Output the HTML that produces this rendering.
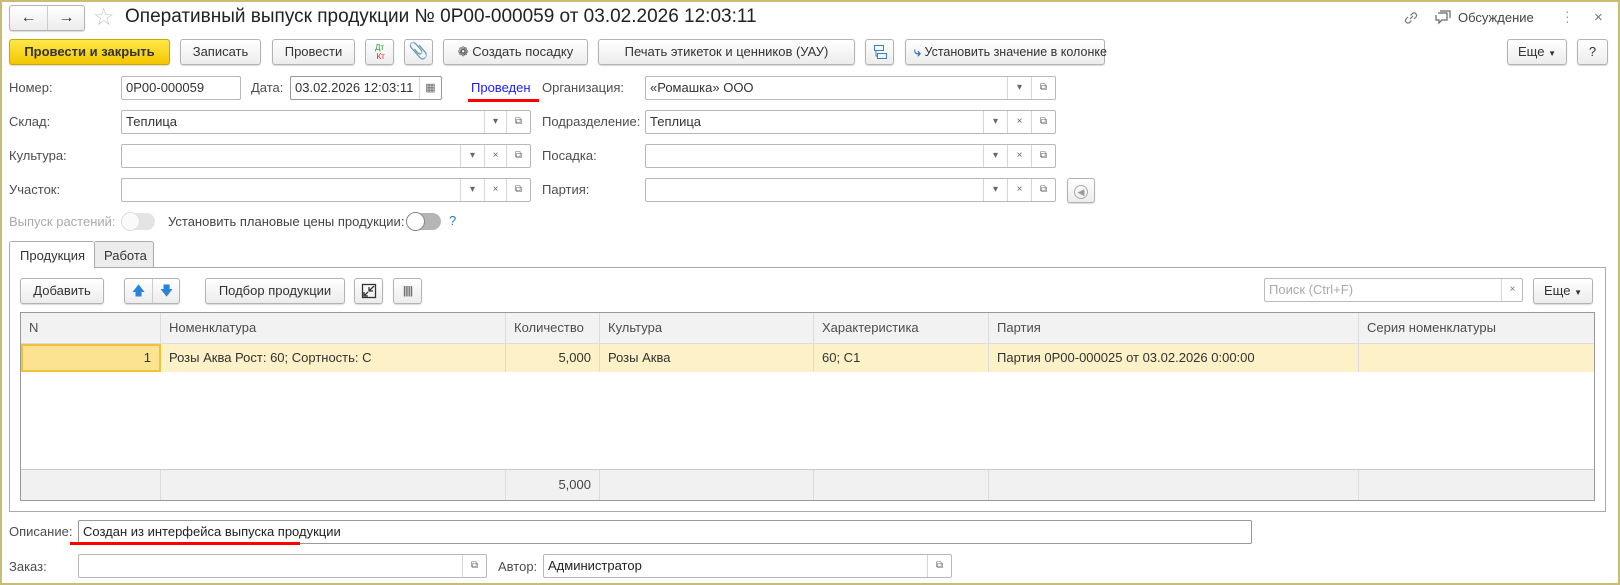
<!DOCTYPE html>
<html><head><meta charset="utf-8"><style>
*{box-sizing:border-box;margin:0;padding:0}
body{width:1620px;height:585px;background:#fff;font-family:"Liberation Sans",Arial,sans-serif;font-size:13px;color:#333;position:relative;overflow:hidden}
.a{position:absolute}
.frame{left:0;top:0;width:1620px;height:585px;border:2px solid #c9bd76;border-right-width:2px}
.btn{position:absolute;height:26px;border:1px solid #b3b3b3;border-radius:3px;background:linear-gradient(#fff,#ececec);box-shadow:0 1px 1px rgba(0,0,0,.15);text-align:center;line-height:24px;color:#333;font-size:13px;white-space:nowrap}
.y{background:linear-gradient(#ffe84a,#f3c600);border-color:#c9a800;font-weight:bold;color:#333}
.lbl{position:absolute;color:#4d4d4d;line-height:16px}
.inp{position:absolute;height:24px;border:1px solid #b8b8b8;border-radius:2px;background:#fff;line-height:22px;padding-left:4px;color:#333;white-space:nowrap;overflow:hidden}
.sb{position:absolute;top:0;height:22px;border-left:1px solid #d6d6d6;text-align:center;font-size:10px;color:#666;line-height:22px}
.cell{position:absolute;height:100%;border-right:1px solid #dcdcdc;padding-left:8px;white-space:nowrap}
</style></head><body>
<div class="a frame"></div>

<div class="btn" style="left:9px;top:5px;width:76px;height:26px"><span style="position:absolute;left:0;width:38px;border-right:1px solid #ccc;height:24px;font-size:16px">&#8592;</span><span style="position:absolute;left:38px;width:37px;font-size:16px">&#8594;</span></div>
<div class="a" style="left:93px;top:3px;font-size:24px;color:#c8c8c8">&#9734;</div>
<div class="a" style="left:125px;top:6px;font-size:19px;color:#222;white-space:nowrap">Оперативный выпуск продукции № 0P00-000059 от 03.02.2026 12:03:11</div>
<svg class="a" style="left:1402px;top:9px" width="18" height="18" viewBox="0 0 18 18" fill="none" stroke="#777" stroke-width="1.2"><path d="M8 10l3-3M6 8l-2 2a2.5 2.5 0 003.5 3.5l2-2M12 10l2-2a2.5 2.5 0 00-3.5-3.5l-2 2"/></svg>
<svg class="a" style="left:1434px;top:9px" width="18" height="18" viewBox="0 0 18 18" fill="none" stroke="#666" stroke-width="1.2"><path d="M4 4h9v7H8l-3 3v-3H2V6M6 2h10v7"/></svg>
<div class="a" style="left:1458px;top:10px;color:#444">Обсуждение</div>
<div class="a" style="left:1565px;top:9px;color:#999;font-size:14px;line-height:5px">·<br>·<br>·</div>
<div class="a" style="left:1594px;top:9px;color:#777;font-size:15px">×</div>

<div class="btn y" style="left:9px;top:39px;width:161px">Провести и закрыть</div>
<div class="btn" style="left:180px;top:39px;width:81px">Записать</div>
<div class="btn" style="left:272px;top:39px;width:83px">Провести</div>
<div class="btn" style="left:365px;top:39px;width:29px;font-size:8px;line-height:9px;padding-top:3px"><span style="color:#2a9a2a">Дт</span><br><span style="color:#d22">&nbsp;Кт</span></div>
<div class="btn" style="left:404px;top:39px;width:29px;font-size:16px;color:#666">&#128206;</div>
<div class="btn" style="left:443px;top:39px;width:145px"><span style="color:#444">&#10049;</span> Создать посадку</div>
<div class="btn" style="left:598px;top:39px;width:257px">Печать этикеток и ценников (УАУ)</div>
<div class="btn" style="left:865px;top:39px;width:29px"><svg width="16" height="16" viewBox="0 0 16 16" style="margin-top:4px" fill="none" stroke="#3b7fc4"><rect x="2.5" y="1.5" width="9" height="5"/><rect x="5.5" y="9.5" width="9" height="5"/><path d="M4 7v5h1"/></svg></div>
<div class="btn" style="left:905px;top:39px;width:200px;font-size:12.5px;text-align:left;padding-left:8px"><span style="color:#2c6fb7;font-weight:bold">&#10551;</span> Установить значение в колонке</div>
<div class="btn" style="left:1507px;top:39px;width:60px">Еще <span style="font-size:8px">&#9660;</span></div>
<div class="btn" style="left:1577px;top:39px;width:31px">?</div>

<div class="lbl" style="left:9px;top:80px">Номер:</div>
<div class="inp" style="left:121px;top:76px;width:120px">0P00-000059</div>
<div class="lbl" style="left:251px;top:80px">Дата:</div>
<div class="inp" style="left:290px;top:76px;width:152px;border-color:#999">03.02.2026 12:03:11<span class="sb" style="left:128px;width:22px;font-size:11px">&#9638;</span></div>
<div class="a" style="left:471px;top:80px;color:#1a1aff">Проведен</div>
<div class="a" style="left:468px;top:99px;width:71px;height:3px;background:#f00"></div>
<div class="lbl" style="left:542px;top:80px">Организация:</div>
<div class="inp" style="left:645px;top:76px;width:411px">«Ромашка» ООО<span class="sb" style="left:361px;width:24px">&#9662;</span><span class="sb" style="left:385px;width:24px">&#10697;</span></div>

<div class="lbl" style="left:9px;top:114px">Склад:</div>
<div class="inp" style="left:121px;top:110px;width:410px">Теплица<span class="sb" style="left:362px;width:22px">&#9662;</span><span class="sb" style="left:384px;width:24px">&#10697;</span></div>
<div class="lbl" style="left:542px;top:114px">Подразделение:</div>
<div class="inp" style="left:645px;top:110px;width:411px">Теплица<span class="sb" style="left:337px;width:24px">&#9662;</span><span class="sb" style="left:361px;width:24px">×</span><span class="sb" style="left:385px;width:24px">&#10697;</span></div>

<div class="lbl" style="left:9px;top:148px">Культура:</div>
<div class="inp" style="left:121px;top:144px;width:410px"><span class="sb" style="left:338px;width:24px">&#9662;</span><span class="sb" style="left:362px;width:22px">×</span><span class="sb" style="left:384px;width:24px">&#10697;</span></div>
<div class="lbl" style="left:542px;top:148px">Посадка:</div>
<div class="inp" style="left:645px;top:144px;width:411px"><span class="sb" style="left:337px;width:24px">&#9662;</span><span class="sb" style="left:361px;width:24px">×</span><span class="sb" style="left:385px;width:24px">&#10697;</span></div>

<div class="lbl" style="left:9px;top:182px">Участок:</div>
<div class="inp" style="left:121px;top:178px;width:410px"><span class="sb" style="left:338px;width:24px">&#9662;</span><span class="sb" style="left:362px;width:22px">×</span><span class="sb" style="left:384px;width:24px">&#10697;</span></div>
<div class="lbl" style="left:542px;top:182px">Партия:</div>
<div class="inp" style="left:645px;top:178px;width:411px"><span class="sb" style="left:337px;width:24px">&#9662;</span><span class="sb" style="left:361px;width:24px">×</span><span class="sb" style="left:385px;width:24px">&#10697;</span></div>
<div class="btn" style="left:1067px;top:178px;width:28px;height:25px"><span style="display:inline-block;width:14px;height:14px;border:1px solid #aaa;border-radius:50%;margin-top:5px;font-size:9px;line-height:12px;color:#999">&#9664;</span></div>

<div class="lbl" style="left:9px;top:214px;color:#aaa">Выпуск растений:</div>
<div class="a" style="left:121px;top:213px;width:34px;height:17px;border-radius:9px;background:#e4e4e4"></div>
<div class="a" style="left:121px;top:212px;width:19px;height:19px;border-radius:50%;background:#fafafa;border:1px solid #ddd"></div>
<div class="lbl" style="left:168px;top:214px;color:#444">Установить плановые цены продукции:</div>
<div class="a" style="left:407px;top:213px;width:34px;height:17px;border-radius:9px;background:#b5b5b5"></div>
<div class="a" style="left:406px;top:212px;width:19px;height:19px;border-radius:50%;background:#fff;border:1px solid #888"></div>
<div class="a" style="left:449px;top:213px;color:#2a7ac0">?</div>

<div class="a" style="left:9px;top:267px;width:1597px;height:245px;border:1px solid #aaa"></div>
<div class="a" style="left:9px;top:241px;width:86px;height:27px;border:1px solid #aaa;border-bottom:none;border-radius:3px 3px 0 0;background:#fff;padding:6px 0 0 10px;color:#333">Продукция</div>
<div class="a" style="left:95px;top:241px;width:59px;height:27px;border:1px solid #aaa;border-left:none;border-radius:0 3px 0 0;background:#ececec;padding:6px 0 0 9px;color:#333">Работа</div>

<div class="btn" style="left:20px;top:278px;width:84px">Добавить</div>
<div class="btn" style="left:124px;top:278px;width:56px"><span style="position:absolute;left:0;width:28px;border-right:1px solid #ccc;color:#2b83d6">&#129093;</span><span style="position:absolute;left:28px;width:27px;color:#2b83d6">&#129095;</span></div>
<div class="btn" style="left:205px;top:278px;width:140px">Подбор продукции</div>
<div class="btn" style="left:354px;top:278px;width:29px"><svg width="16" height="16" viewBox="0 0 16 16" style="margin-top:4px" fill="none" stroke="#333" stroke-width="1.3"><rect x="1.5" y="1.5" width="13" height="13"/><path d="M13 3L8 8M8 4v4h4M3 13l4-4M3 9v4h4"/></svg></div>
<div class="btn" style="left:393px;top:278px;width:29px;font-size:11px;letter-spacing:-1px;color:#444">|||||</div>
<div class="inp" style="left:1264px;top:278px;width:259px;color:#aaa;border-color:#bbb">Поиск (Ctrl+F)<span class="sb" style="left:236px;width:22px;color:#777">×</span></div>
<div class="btn" style="left:1533px;top:278px;width:60px">Еще <span style="font-size:8px">&#9660;</span></div>

<div class="a" style="left:20px;top:312px;width:1575px;height:189px;border:1px solid #999;background:#fff">
 <div class="a" style="left:0;top:0;width:1573px;height:31px;background:#f2f2f2;border-bottom:1px solid #ddd;line-height:30px;color:#4d4d4d">
  <div class="cell" style="left:0;width:140px">N</div>
  <div class="cell" style="left:140px;width:345px">Номенклатура</div>
  <div class="cell" style="left:485px;width:94px">Количество</div>
  <div class="cell" style="left:579px;width:214px">Культура</div>
  <div class="cell" style="left:793px;width:175px">Характеристика</div>
  <div class="cell" style="left:968px;width:370px">Партия</div>
  <div class="cell" style="left:1338px;width:235px;border:none">Серия номенклатуры</div>
 </div>
 <div class="a" style="left:0;top:31px;width:1573px;height:28px;background:#fdf1c8;line-height:27px;color:#333">
  <div class="cell" style="left:0;width:140px;background:#fbe391;border:2px solid #f0c23a;text-align:right;padding-right:8px;line-height:24px">1</div>
  <div class="cell" style="left:140px;width:345px">Розы Аква Рост: 60; Сортность: С</div>
  <div class="cell" style="left:485px;width:94px;text-align:right;padding-right:8px">5,000</div>
  <div class="cell" style="left:579px;width:214px">Розы Аква</div>
  <div class="cell" style="left:793px;width:175px">60; С1</div>
  <div class="cell" style="left:968px;width:370px">Партия 0P00-000025 от 03.02.2026 0:00:00</div>
  <div class="cell" style="left:1338px;width:235px;border:none"></div>
 </div>
 <div class="a" style="left:0;top:156px;width:1573px;height:31px;background:#f1f1f1;border-top:1px solid #ccc;line-height:30px;color:#444">
  <div class="cell" style="left:0;width:140px"></div>
  <div class="cell" style="left:140px;width:345px"></div>
  <div class="cell" style="left:485px;width:94px;text-align:right;padding-right:8px">5,000</div>
  <div class="cell" style="left:579px;width:214px"></div>
  <div class="cell" style="left:793px;width:175px"></div>
  <div class="cell" style="left:968px;width:370px"></div>
 </div>
</div>

<div class="lbl" style="left:9px;top:524px">Описание:</div>
<div class="inp" style="left:78px;top:520px;width:1174px;border-color:#999;color:#222">Создан из интерфейса выпуска продукции</div>
<div class="a" style="left:70px;top:542px;width:230px;height:3px;background:#f00"></div>
<div class="lbl" style="left:9px;top:559px">Заказ:</div>
<div class="inp" style="left:78px;top:554px;width:409px"><span class="sb" style="left:383px;width:24px">&#10697;</span></div>
<div class="lbl" style="left:498px;top:559px">Автор:</div>
<div class="inp" style="left:543px;top:554px;width:409px;color:#222">Администратор<span class="sb" style="left:383px;width:24px">&#10697;</span></div>
</body></html>
